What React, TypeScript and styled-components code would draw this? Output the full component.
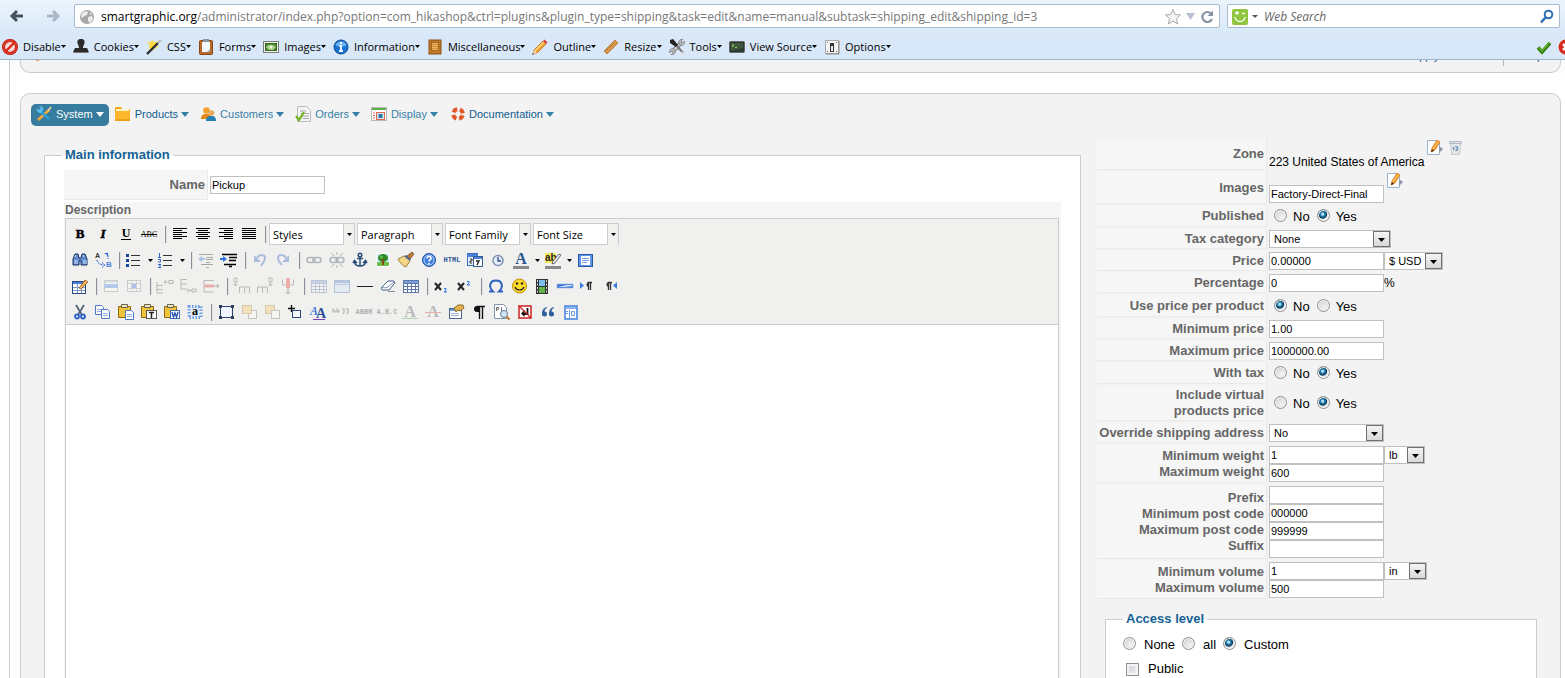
import React, { ReactNode } from 'react';
import styled, { createGlobalStyle, css } from 'styled-components';

const Global = createGlobalStyle`
  * { box-sizing: border-box; }
  body { margin: 0; background: #fff; color: #000; font: 13px/16px "Liberation Sans", Arial, sans-serif; overflow: hidden; }
  button, input, select, textarea { font: inherit; color: inherit; margin: 0; padding: 0; }
  button { border: 0; background: none; }
  svg { display: block; flex: none; }
`;

/* ---------- browser chrome ---------- */

const Page = styled.div`
  display: flex;
  flex-direction: column;
  height: 100vh;
  overflow: hidden;
`;

const Chrome = styled.header`
  flex: none;
  background: linear-gradient(#ebf4fd, #d9e8f8 34px);
  border-bottom: 1px solid #9fb4ce;
  font: 12px/16px "Open Sans", "Noto Sans", sans-serif;
  overflow: hidden;
`;

const NavBar = styled.div`
  display: flex;
  align-items: center;
  gap: 7px;
  padding: 4px 5px 0 8px;
`;

const NavButtons = styled.div`
  display: flex;
  gap: 18px;
  width: 59px;
`;

const IconButton = styled.button`
  display: flex;
  align-items: center;
  justify-content: center;
`;

const Field = styled.div<{ $grow?: boolean }>`
  display: flex;
  align-items: center;
  gap: 4px;
  height: 24px;
  padding: 1px 4px 0;
  background: #fff;
  border: 1px solid #a9bad0;
  border-radius: 2px;
  ${(p) => (p.$grow ? 'flex: 1; min-width: 0;' : 'flex: none; width: 333px;')}
`;

const Url = styled.div`
  flex: 1;
  min-width: 0;
  color: #777;
  white-space: nowrap;
  overflow: hidden;
  padding-left: 2px;
  b { color: #000; font-weight: 400; }
`;

const SearchInput = styled.input`
  flex: 1;
  min-width: 0;
  border: 0;
  background: none;
  outline: 0;
  font-style: italic;
  padding-left: 2px;
  &::placeholder { color: #666; opacity: 1; }
`;

const DevBar = styled.div`
  display: flex;
  align-items: center;
  height: 31px;
  padding: 6px 0 0 2px;
  font-size: 11px;
`;

const DevItem = styled.button`
  flex: none;
  display: flex;
  align-items: center;
  height: 22px;
  margin-right: 7px;
  white-space: nowrap;
  svg:first-child { margin-right: 5px; }
`;

const DevStatus = styled.div`
  display: flex;
  gap: 6px;
  margin-left: auto;
  margin-right: -9px;
`;

/* ---------- page frame ---------- */

const Frame = styled.main`
  flex: 1;
  min-height: 0;
  display: flex;
  flex-direction: column;
  margin-left: 9px;
  border-left: 1px solid #ccc;
`;

const TopStrip = styled.div`
  flex: none;
  height: 13px;
  background: #fbfbfb;
  padding: 0 4px 0 10px;
  margin-bottom: 20px;
  overflow: hidden;
`;

const TopPanel = styled.div`
  display: flex;
  align-items: flex-start;
  justify-content: flex-end;
  height: 13px;
  overflow: hidden;
  background: #f3f3f3;
  border: 1px solid #ccc;
  border-top: 0;
  border-radius: 0 0 10px 10px;
  padding: 0 10px;
`;

const TopMark = styled.span`
  width: 3px;
  height: 1px;
  margin: 0 auto 0 5px;
  background: #e8954a;
`;

const TopLink = styled.a<{ $right: number }>`
  margin-top: -11px;
  margin-right: ${(p) => p.$right}px;
  font-size: 11px;
  line-height: 14px;
  color: #146295;
  text-decoration: none;
`;

const TopDivider = styled.span`
  width: 1px;
  height: 6px;
  margin-right: 16px;
  background: #bbb;
`;

const Panel = styled.section`
  flex: 1;
  min-height: 0;
  overflow: hidden;
  margin: 0 4px 0 10px;
  background: #f3f3f3;
  border: 1px solid #ccc;
  border-bottom: 0;
  border-radius: 10px 10px 0 0;
`;

const Menu = styled.nav`
  display: flex;
  gap: 1px;
  padding: 10px 10px 0;
`;

const MenuItem = styled.a<{ $active?: boolean; $dark?: boolean }>`
  display: flex;
  align-items: center;
  gap: 3px;
  height: 22px;
  padding: 0 5px 2px;
  border-radius: 5px;
  font-size: 11px;
  text-decoration: none;
  color: ${(p) => (p.$active ? '#fff' : p.$dark ? '#0f5c92' : '#3680a8')};
  background: ${(p) => (p.$active ? '#367c9e' : 'transparent')};
  svg:first-child { margin-right: 1px; }
`;

const Columns = styled.div`
  display: grid;
  grid-template-columns: minmax(0, 1fr) 440px;
  gap: 16px;
  align-items: start;
  padding: 11px 23px 0 23px;
`;

const Fieldset = styled.fieldset<{ $top: number; $left: number }>`
  min-width: 0;
  margin: ${(p) => p.$top}px 0 0 ${(p) => p.$left}px;
  padding: 5px 17px 17px;
  border: 1px solid #ccc;
  background: #fff;
`;

const Legend = styled.legend`
  padding: 0 3px;
  font-weight: 700;
  color: #146295;
`;

/* ---------- forms ---------- */

const FormTable = styled.table<{ $full?: boolean }>`
  border-collapse: separate;
  border-spacing: 2px;
  width: ${(p) => (p.$full ? '100%' : 'auto')};
  margin-left: ${(p) => (p.$full ? 0 : -2)}px;
  td { padding: 0; }
`;

const KeyCell = styled.th<{ $w: number; $h: number }>`
  width: ${(p) => p.$w}px;
  height: ${(p) => p.$h}px;
  padding: 0 2px 0 0;
  text-align: right;
  font-weight: 700;
  color: #666;
  background: #f6f6f6;
  border-right: 1px solid #e9e9e9;
  border-bottom: 1px solid #e9e9e9;
  label, span { display: block; }
`;

const DescriptionCell = styled.td`
  background: #f6f6f6;
`;

const DescriptionLabel = styled.label`
  display: block;
  padding-left: 1px;
  font-size: 12px;
  line-height: 17px;
  font-weight: 700;
  color: #666;
`;

const Stack = styled.div`
  display: flex;
  flex-direction: column;
`;

const Line = styled.div<{ $align?: string }>`
  display: flex;
  align-items: ${(p) => p.$align || 'center'};
  font-size: 12px;
`;

const Lift = styled.div`
  display: flex;
  gap: 5px;
  padding-bottom: 14px;
  margin-left: 3px;
`;

const TextInput = styled.input`
  width: 115px;
  height: 18px;
  padding: 0 1px;
  border: 1px solid #c0c0c0;
  background: #fff;
  font-size: 11px;
  outline: 0;
`;

const SelectWrap = styled.span<{ $w: number }>`
  display: inline-grid;
  grid-template-columns: minmax(0, 1fr) 17px;
  align-items: center;
  width: ${(p) => p.$w}px;
  height: 18px;
  border: 1px solid #c0c0c0;
  background: #fff;
  font-size: 11px;
  select {
    grid-area: 1 / 1 / 2 / 3;
    appearance: none;
    border: 0;
    outline: 0;
    height: 16px;
    padding: 0 17px 0 4px;
    background: transparent;
  }
  > span {
    grid-area: 1 / 2;
    display: flex;
    align-items: center;
    justify-content: center;
    height: 16px;
    padding-top: 2px;
    border: 1px solid #707070;
    background: linear-gradient(#f4f4f4, #d8d8d8);
    pointer-events: none;
  }
`;

const RadioLabel = styled.label<{ $gap: number }>`
  display: flex;
  align-items: flex-start;
  gap: ${(p) => p.$gap}px;
  margin-right: 7px;
  span { padding-top: 1px; }
`;

const Radio = styled.input`
  appearance: none;
  flex: none;
  width: 13px;
  height: 13px;
  margin-top: 1px;
  border: 1px solid #8e8f8f;
  border-radius: 50%;
  background: radial-gradient(circle at 60% 65%, #f4f4f4, #c4c8cd);
  box-shadow: inset 0 0 0 1px #f6f6f6;
  &:checked {
    background: radial-gradient(circle at 42% 38%, #b5e2f5 0 1px, #2786b4 2px, #0b3a5c 4px, #e4e8ea 5px);
  }
`;

const RadioRow = styled.div<{ $indent: number }>`
  display: flex;
  padding-left: ${(p) => p.$indent}px;
`;

const AccessBody = styled.div`
  display: flex;
  flex-direction: column;
  gap: 8px;
  padding-top: 4px;
`;

const CheckLabel = styled.label`
  display: flex;
  align-items: center;
  gap: 9px;
  padding-left: 3px;
`;

const Checkbox = styled.input`
  appearance: none;
  width: 13px;
  height: 13px;
  border: 1px solid #8e8f8f;
  background: linear-gradient(135deg, #c9cdd2, #f6f6f6);
  box-shadow: inset 0 0 0 2px #f4f4f4;
`;

/* ---------- rich text editor ---------- */

const Editor = styled.div`
  margin: -1px 2px 0 1px;
  border: 1px solid #ccc;
  background: #fff;
`;

const Toolbar = styled.div`
  display: flex;
  flex-direction: column;
  gap: 4px;
  padding: 4px 2px 1px 3px;
  background: #f0f0ee;
  border-bottom: 1px solid #ccc;
`;

const ToolRow = styled.div`
  display: flex;
  height: 22px;
`;

const ToolButton = styled.button<{ $off?: boolean }>`
  flex: none;
  display: flex;
  align-items: center;
  justify-content: center;
  width: 22px;
  height: 22px;
  margin-right: 1px;
  color: #000;
  ${(p) => p.$off && css`opacity: 0.35;`}
`;

const SplitArrow = styled.button`
  display: flex;
  align-items: center;
  justify-content: center;
  width: 9px;
  height: 22px;
`;

const Separator = styled.span`
  width: 2px;
  height: 17px;
  margin: 3px 2px 0 4px;
  border-left: 1px solid #8f8f9c;
  border-right: 1px solid #e2e2e2;
`;

const ToolSelect = styled.span`
  display: grid;
  grid-template-columns: minmax(0, 1fr) 11px;
  width: 86px;
  height: 22px;
  margin-right: 2px;
  border: 1px solid #ccc;
  background: #fff;
  font: 11px/20px "Open Sans", "Noto Sans", sans-serif;
  select {
    grid-area: 1 / 1 / 2 / 3;
    appearance: none;
    border: 0;
    outline: 0;
    padding: 1px 12px 0 3px;
    background: transparent;
    color: #000;
  }
  > span {
    grid-area: 1 / 2;
    display: flex;
    align-items: center;
    justify-content: center;
    border-left: 1px solid #ccc;
    background: #f0f0ee;
    pointer-events: none;
  }
`;

const Body = styled.textarea`
  display: block;
  width: 100%;
  height: 420px;
  border: 0;
  outline: 0;
  resize: none;
  background: #fff;
`;

/* ---------- icons ---------- */

const Down = ({ w = 5, h = 3, color = '#000' }: { w?: number; h?: number; color?: string }) => (
  <svg width={w} height={h} viewBox="0 0 10 6" preserveAspectRatio="none" aria-hidden="true">
    <path d="M0 0h10L5 6z" fill={color} />
  </svg>
);

const Ico = ({ size = 16, box = 16, children }: { size?: number; box?: number; children: ReactNode }) => (
  <svg width={size} height={size} viewBox={`0 0 ${box} ${box}`} fill="none" aria-hidden="true">
    {children}
  </svg>
);

const PencilShape = () => (
  <>
    <path d="M1 15l1-4L11 2l3 3-9 9z" fill="#f6a02c" stroke="#b8660c" strokeWidth=".7" />
    <path d="M3 12l9-9" stroke="#ffdb8c" strokeWidth="1.3" />
    <path d="M11 2l1.600-1.500 3 3L14 5z" fill="#d9434c" />
    <path d="M1 15l1-4 3 3z" fill="#f1dcb9" />
    <path d="M0 16l1-2 1 1z" fill="#333" />
  </>
);

const dev: Record<string, ReactNode> = {
  disable: (
    <>
      <circle cx="8" cy="8" r="6.500" fill="#f6d7d2" stroke="#a91208" strokeWidth="3" />
      <circle cx="8" cy="8" r="6.500" stroke="#e23a27" strokeWidth="2" />
      <path d="M3.500 12.500l9-9" stroke="#d92a1b" strokeWidth="2.400" />
    </>
  ),
  cookies: (
    <>
      <path d="M8 0c3 0 4 2 3.500 4-.5 2-1.500 3-1.500 5h4l1.500 3v2H.5v-2L2 9h4c0-2-1-3-1.500-5C4 2 5 0 8 0z" fill="#2b2b2b" />
      <path d="M1 13.500h14" stroke="#777" />
    </>
  ),
  css: (
    <>
      <path d="M6 0l1.500 3.500L11 2 9.500 5.500 13 8 9 8.500 8 12 6 9 2 10l2-3.500L1 3l4 .5z" fill="#ffd93b" />
      <path d="M1 15L12 4" stroke="#2d2d2d" strokeWidth="2.400" />
      <path d="M12 4l3-3" stroke="#bbb" strokeWidth="2.400" />
    </>
  ),
  forms: (
    <>
      <rect x="1.500" y="1.500" width="13" height="14" rx="1" fill="#b96a2b" stroke="#8a4513" />
      <path d="M4 3h8v10H9l-5 0z" fill="#f4f7fb" />
      <path d="M9 13l3-3v3z" fill="#9fb0c4" />
      <path d="M5 0h6v3H5z" fill="#8d95a0" />
    </>
  ),
  images: (
    <>
      <rect x=".5" y="2.500" width="15" height="11" fill="#f5f5ef" stroke="#7a7a7a" />
      <rect x="2.500" y="4.500" width="11" height="7" fill="#4f8a35" stroke="#35661c" />
      <path d="M3 8c3-3 6-3 10 0l-3 3H6z" fill="#a9d08a" />
      <circle cx="8" cy="8" r="1.500" fill="#f4f9d8" />
    </>
  ),
  info: (
    <>
      <circle cx="8" cy="8" r="7" fill="#1a74d1" stroke="#0c4a94" />
      <path d="M2.500 6a6 6 0 0 1 11 0c-3 2-8 2-11 0z" fill="#6db4f2" />
      <path d="M8 3v2M6.500 7H8v5M6 12.200h4" stroke="#fff" strokeWidth="1.800" />
    </>
  ),
  misc: (
    <>
      <rect x="2" y="1" width="12" height="14" fill="#c07a2b" stroke="#8e5112" />
      <rect x="4.500" y="3.500" width="7" height="8" fill="#f0b35c" stroke="#a3661d" />
      <path d="M5 5.500h6M5 7.500h6M5 9.500h6" stroke="#cf8f3c" />
    </>
  ),
  outline: <PencilShape />,
  resize: (
    <>
      <path d="M1 12L12 1l3 3L4 15z" fill="#d8984c" stroke="#b0722c" strokeWidth=".8" />
      <path d="M4 10l1 1M6 8l1 1M8 6l1 1M10 4l1 1" stroke="#9a6426" strokeWidth=".8" />
    </>
  ),
  tools: (
    <>
      <path d="M3 13L13 3" stroke="#6d6d6d" strokeWidth="4" />
      <path d="M3 13L13 3" stroke="#d2d2d2" strokeWidth="2.400" />
      <path d="M10 5c-1-3 1-5 4-5l-2 2.500 1 1.500 3-2c0 4-3 5-5 4zM6 11c1 3-1 5-4 5l2-2.500L3 12l-3 2c0-4 3-5 5-4z" fill="#b9b9b9" stroke="#6d6d6d" strokeWidth=".6" />
      <path d="M1 1l3-1 5 6-2 2L1 4z" fill="#222" />
      <path d="M8 7l6 7" stroke="#777" strokeWidth="2" />
      <path d="M12 13l3 3" stroke="#ddd" strokeWidth="2" />
    </>
  ),
  source: (
    <>
      <rect x=".5" y="2.500" width="15" height="11" rx="1" fill="#2c3a2c" stroke="#62686e" />
      <path d="M2 4h12v5L2 12z" fill="#3f5640" />
      <path d="M3 5.500l2 1-2 1M6 8.500h2" stroke="#8fe04b" />
    </>
  ),
  options: (
    <>
      <rect x="1.500" y="1.500" width="13" height="13" fill="#f4f4f4" stroke="#a8a8a8" />
      <path d="M15 2v13H2" stroke="#888" />
      <rect x="6" y="4" width="4" height="9" fill="#333" />
      <rect x="7" y="7" width="2" height="5" fill="#f0f0f0" />
      <path d="M3 12.500h1M12 12.500h1M3 3.500h1M12 3.500h1" stroke="#777" />
    </>
  ),
};

const menuIcons: Record<string, ReactNode> = {
  system: (
    <>
      <path d="M2 14L13 4" stroke="#f0a83a" strokeWidth="2.600" />
      <path d="M12 5l3-4" stroke="#f5d9a0" strokeWidth="1.500" />
      <path d="M4 5l9 8" stroke="#2b9fd8" strokeWidth="2.400" />
      <path d="M1 2l2 2 2-2-2-2c3-.5 5 2 4 4L5 7C2 7.500 0 5 1 2z" fill="#58bdec" />
    </>
  ),
  products: (
    <>
      <path d="M0 2l1-1h5l1 2h8v12H0z" fill="#f6a40f" />
      <path d="M1 3h13v2H1z" fill="#fff2c4" />
      <path d="M0 5h15v10H0z" fill="#fdb72d" />
      <path d="M0 14h15" stroke="#e08a06" />
    </>
  ),
  customers: (
    <>
      <circle cx="6.500" cy="4.500" r="3.300" fill="#f2a02e" />
      <path d="M1 13c0-4 2-5 5.500-5S11 9 11 13z" fill="#e58717" />
      <circle cx="11.500" cy="7" r="2.800" fill="#e9a85a" />
      <path d="M6 15c0-4 2-5 5.500-5s4.500 2 4.500 5z" fill="#2480b4" />
    </>
  ),
  orders: (
    <>
      <path d="M2.500.5h9l4 4v11h-13z" fill="#f4f4f4" stroke="#bbb" />
      <path d="M5 5h6M6 7.500h8M7 10h7M8 12.500h6" stroke="#a6a6a6" />
      <path d="M1 10l3 4L9 6" stroke="#6fb51e" strokeWidth="2.200" />
    </>
  ),
  display: (
    <>
      <rect x=".5" y="1.500" width="15" height="13" fill="#fff" stroke="#b9b9b9" />
      <path d="M1 2h14v2H1z" fill="#5db247" />
      <path d="M2 7h2M2 9.500h2M2 12h2" stroke="#e2654d" />
      <rect x="5.500" y="6.500" width="8" height="7" fill="#cfe6f5" stroke="#e2654d" />
      <rect x="7.500" y="8" width="4" height="4" fill="#2c76a8" />
    </>
  ),
  docs: (
    <>
      <circle cx="9" cy="8" r="4.800" stroke="#f2ede8" strokeWidth="4" />
      <circle cx="9" cy="8" r="4.800" stroke="#e0592b" strokeWidth="4" strokeDasharray="4.600 2.940" strokeDashoffset="-1.500" />
    </>
  ),
};

const EditIcon = () => (
  <Ico>
    <path d="M.5.5h9l3 3v11H.5z" fill="#fdfdfd" stroke="#9db4d0" />
    <path d="M12 6l4 3-4 4z" fill="#8b97a8" />
    <path d="M4 12l1-4 5-8 3 2-5 8z" fill="#f69a23" stroke="#c96b0d" strokeWidth=".6" />
    <path d="M6 9l5-7" stroke="#ffd98a" />
    <path d="M4 12l1-3 2 2z" fill="#3a2a1a" />
  </Ico>
);

const TrashIcon = () => (
  <Ico>
    <path d="M2.500 2.500h10l-1 12h-8z" fill="#e4e7ea" stroke="#c3c9d0" />
    <path d="M1.500 1.500h12v2h-12z" fill="#dde1e6" stroke="#b4bbc3" />
    <circle cx="7.500" cy="8.500" r="2" stroke="#7393bd" strokeWidth="1.500" strokeDasharray="3 1.200" />
  </Ico>
);

const lines = (spans: [number, number][]) => (
  <path d={spans.map(([x, w], i) => `M${x} ${4.5 + i * 2}h${w}`).join('')} stroke="#000" />
);

const serif = (t: string, extra: React.SVGProps<SVGTextElement>) => (
  <text x="10" y="14" textAnchor="middle" fontFamily="Liberation Serif, serif" fontWeight="700" fontSize="13" fill="#000" {...extra}>
    {t}
  </text>
);

const tiny = (t: string, fill: string) => (
  <text x="10" y="12" textAnchor="middle" fontFamily="Liberation Mono, monospace" fontWeight="700" fontSize="7" fill={fill}>
    {t}
  </text>
);

const Doc = ({ x = 0, y = 0 }: { x?: number; y?: number }) => (
  <g transform={`translate(${x} ${y})`}>
    <path d="M.5.5h6l2 2v7h-8z" fill="#fff" stroke="#4d79c7" />
    <path d="M2 4.500h5M2 6.500h5" stroke="#8bb0e8" />
  </g>
);

const Clipboard = ({ children }: { children: ReactNode }) => (
  <>
    <path d="M2.500 4.500h12v11h-12z" fill="#f0c33c" stroke="#8d6a12" />
    <path d="M5.500 2.500h6v3h-6z" fill="#e9e4d0" stroke="#6d6340" />
    {children}
  </>
);

const Grid = ({ fill = '#fff' }: { fill?: string }) => (
  <>
    <rect x="2.500" y="4.500" width="15" height="12" fill={fill} stroke="#5c78a8" />
    <path d="M3 6h14" stroke="#7a9ee0" strokeWidth="2" />
    <path d="M3 7.500h14M3 10.500h14M3 13.500h14M6.500 7v9M10.500 7v9M14.500 7v9" stroke="#5c78a8" />
  </>
);

const tool: Record<string, ReactNode> = {
  bold: serif('B', { stroke: '#000', strokeWidth: 0.5 }),
  italic: serif('I', { fontStyle: 'italic', stroke: '#000', strokeWidth: 0.5 }),
  underline: (
    <>
      {serif('U', { y: 13, fontSize: 12 })}
      <path d="M5 15.500h10" stroke="#000" />
    </>
  ),
  strike: (
    <>
      <text x="10" y="13" textAnchor="middle" fontFamily="Liberation Serif, serif" fontSize="8" fill="#000">ABC</text>
      <path d="M2 10.500h16" stroke="#000" />
    </>
  ),
  left: lines([[3, 14], [3, 9], [3, 14], [3, 9], [3, 14], [3, 9]]),
  center: lines([[3, 14], [5, 10], [3, 14], [5, 10], [3, 14], [5, 10]]),
  right: lines([[3, 14], [8, 9], [3, 14], [8, 9], [3, 14], [8, 9]]),
  full: lines([[3, 14], [3, 14], [3, 14], [3, 14], [3, 14], [3, 14]]),
  find: (
    <>
      <path d="M3 9l2-5h3l1 4h2l1-4h3l2 5v6h-6v-4H9v4H3z" fill="#5f8ace" stroke="#17315f" />
      <path d="M5 7l1-2M14 7l-1-2M5 10v4M14 10v4M7 10v4M16 10v4" stroke="#cfe0fa" />
    </>
  ),
  replace: (
    <>
      <text x="2" y="8" fontFamily="Liberation Sans" fontWeight="700" fontSize="7" fill="#333">A</text>
      <text x="13" y="17" fontFamily="Liberation Sans" fontWeight="700" fontSize="8" fill="#4b7fe0">B</text>
      <path d="M4 10c0 3 3 5 7 5M9 12.500l3 2.500-3 2.500M15 5v4" stroke="#2b62d9" strokeDasharray="2 1" />
      <path d="M11 3h4v4l-1-2z" fill="#2b62d9" />
    </>
  ),
  bullets: (
    <>
      <path d="M2 5.500h3M2 10.500h3M2 15.500h3" stroke="#17479e" strokeWidth="3" />
      <path d="M7 5.500h9M7 10.500h9M7 15.500h9" stroke="#333" />
    </>
  ),
  numbers: (
    <>
      <path d="M3.500 3v4M2 7.500h3M2 9.500h2.500v2M2 12h3M2 14.500h3M3 16h2M2 17.500h3" stroke="#2f63bd" />
      <path d="M7 5.500h9M7 10.500h9M7 15.500h9" stroke="#333" />
    </>
  ),
  outdent: (
    <>
      <path d="M3 4.500h14M10 7.500h7M10 9.500h7M10 12.500h4M5 14.500h12M10 17.500h3" stroke="#222" />
      <path d="M2 9l4-3v2h3v2H6v2z" fill="#2f6fe0" />
    </>
  ),
  indent: (
    <>
      <path d="M3 4.500h15M10 7.500h8M10 10.500h7M5 14.500h12M10 16.500h3" stroke="#000" strokeWidth="1.500" />
      <path d="M8 9L4 6v2H1v2h3v2z" fill="#2f6fe0" />
    </>
  ),
  undo: (
    <>
      <path d="M7 8c2-4 8-4 8 0 0 3-2 5-4 8" stroke="#2d5fc0" strokeWidth="2" />
      <path d="M4 5v7h7z" fill="#2d5fc0" />
    </>
  ),
  redo: (
    <>
      <path d="M13 8c-2-4-8-4-8 0 0 3 2 5 4 7" stroke="#2d5fc0" strokeWidth="2" />
      <path d="M16 5v7H9z" fill="#2d5fc0" />
    </>
  ),
  link: (
    <>
      <rect x="3" y="7.500" width="8" height="5" rx="2.500" stroke="#3d4d66" strokeWidth="1.500" />
      <rect x="9" y="7.500" width="8" height="5" rx="2.500" stroke="#3d4d66" strokeWidth="1.500" />
    </>
  ),
  unlink: (
    <>
      <rect x="3" y="7.500" width="8" height="5" rx="2.500" stroke="#3d4d66" strokeWidth="1.500" />
      <rect x="9" y="7.500" width="8" height="5" rx="2.500" stroke="#3d4d66" strokeWidth="1.500" />
      <path d="M4 3l3 3M10 2v3M16 3l-3 3M4 17l3-3M10 18v-3M16 17l-3-3" stroke="#444" />
    </>
  ),
  anchor: (
    <>
      <circle cx="10" cy="5" r="1.800" stroke="#2c4a7c" strokeWidth="1.500" />
      <path d="M10 7v9M7 8.500h6M4.500 11c0 3 2 5 5.500 5s5.500-2 5.500-5M3 13l1.500-2.500L7 13M13 13l2.500-2.500L17 13" stroke="#2c4a7c" strokeWidth="1.500" />
    </>
  ),
  image: (
    <>
      <path d="M3 3h14v14H3z" fill="#fff" />
      <path d="M4 4h12v9H4z" fill="#cfe8fb" />
      <path d="M4 12h12v4H4z" fill="#6fc04a" />
      <ellipse cx="10" cy="8" rx="5" ry="4" fill="#2f8a25" />
      <circle cx="8.500" cy="7" r="1.500" fill="#6cc44c" />
      <path d="M10 9v6" stroke="#8a4a18" strokeWidth="2" />
    </>
  ),
  cleanup: (
    <>
      <path d="M2 9l6-3 6 5-4 6c-3-1-6-4-8-8z" fill="#f3d787" stroke="#8a6a20" strokeWidth=".8" />
      <path d="M8 6l2-1 5 4-1 2z" fill="#4d6fae" />
      <path d="M11 6l5-4 2 2-4 5z" fill="#b9793a" stroke="#7a4818" strokeWidth=".7" />
    </>
  ),
  help: (
    <>
      <circle cx="10" cy="10" r="6.500" fill="#3f7fe0" stroke="#1c4ea3" />
      <circle cx="10" cy="10" r="5" stroke="#cfe0fb" strokeWidth=".8" />
      <path d="M8 8.500c0-3 4.500-2.500 4 0-.3 1.500-2 1.200-2 3M10 13v1.500" stroke="#fff" strokeWidth="1.600" />
    </>
  ),
  html: tiny('HTML', '#2c5a96'),
  date: (
    <>
      <rect x="2.500" y="3.500" width="10" height="12" fill="#e6eefb" stroke="#3a6ac0" />
      <path d="M2 4h11v3H2z" fill="#4a80dc" />
      <rect x="8.500" y="6.500" width="9" height="10" fill="#fff" stroke="#3a5c92" />
      <path d="M9 8h8" stroke="#4a80dc" strokeWidth="2" />
      <path d="M11 11h3l-2 4" stroke="#222" strokeWidth="1.400" />
      <path d="M5 9h2v2H5v2h2" stroke="#333" />
    </>
  ),
  time: (
    <>
      <circle cx="10" cy="10.500" r="5" fill="#e6eefa" stroke="#8093b5" strokeWidth="1.500" />
      <path d="M10 7v4h3" stroke="#28488a" strokeWidth="1.300" />
    </>
  ),
  color: (
    <>
      {serif('A', { y: 14, fontSize: 16, fill: '#2d5590' })}
      <path d="M2 17.500h16" stroke="#888" strokeWidth="3" />
    </>
  ),
  highlight: (
    <>
      <path d="M2 3h11v10H2z" fill="#f7ea5a" />
      <text x="2" y="11" fontFamily="Liberation Sans" fontSize="10" fontWeight="700" fill="#222">ab</text>
      <path d="M9 14l1-3 6-7 2 1-6 8z" fill="#e4e8ee" stroke="#555" strokeWidth=".8" />
      <path d="M2 17.500h16" stroke="#888" strokeWidth="3" />
    </>
  ),
  screen: (
    <>
      <rect x="3.500" y="4.500" width="14" height="12" fill="#5d95ea" stroke="#2c56a3" />
      <rect x="6" y="6" width="9" height="9" fill="#fff" />
      <path d="M7 8.500h7M7 10.500h7M7 12.500h5" stroke="#7aa2df" />
    </>
  ),
  table: (
    <>
      <rect x="2.500" y="5.500" width="13" height="12" fill="#fff" stroke="#2c4a80" />
      <path d="M3 7h12" stroke="#4a80dc" strokeWidth="2" />
      <path d="M3 11.500h12M3 14.500h12M7.500 8v9M11.500 8v9" stroke="#7a9ccc" />
      <path d="M9 12l6-8 3 2-7 7z" fill="#f0b05a" stroke="#8a4d12" strokeWidth=".7" />
    </>
  ),
  rowProps: (
    <>
      <rect x="3.500" y="4.500" width="13" height="11" fill="#fff" stroke="#888" />
      <path d="M3 10h14" stroke="#4a86e8" strokeWidth="4" />
      <path d="M3 6h14" stroke="#8aa" />
    </>
  ),
  cellProps: (
    <>
      <rect x="3.500" y="4.500" width="13" height="11" fill="#fff" stroke="#888" />
      <path d="M3 7.500h14M3 12.500h14M7.500 5v10M12.500 5v10" stroke="#99a" />
      <path d="M8 8h4v4H8z" fill="#2f6fe0" />
    </>
  ),
  rowBefore: <path d="M2 6v11h6M2 9.500h6M2 13.500h6M10 6h4M11 4L9 6l2 2M14 4.500h4v3h-4z" stroke="#555" />,
  rowAfter: <path d="M3 3v10h6M3 3.500h6M3 8h6M10 14.500h4M11 12.500l-2 2 2 2M14 13h4v3h-4z" stroke="#555" />,
  rowDelete: (
    <>
      <path d="M3 4v12h10M3 4.500h10" stroke="#555" />
      <path d="M3 10h10" stroke="#e23a3a" strokeWidth="3" />
      <path d="M13 10h5M16 8l2 2-2 2" stroke="#333" />
    </>
  ),
  colBefore: <path d="M7.500 17v-6h10v6M12.500 11v6M2 2h3v4H2zM3.500 6v4M1.500 8l2 2 2-2" stroke="#555" />,
  colAfter: <path d="M2.500 17v-6h10v6M7.500 11v6M14 2h3v4h-3zM15.500 6v4M13.500 8l2 2 2-2" stroke="#555" />,
  colDelete: (
    <>
      <path d="M4.500 4v5h3M15.500 4v5h-3M4.500 3.500v2M15.500 3.500v2" stroke="#555" />
      <path d="M10 2v10" stroke="#e23a3a" strokeWidth="4" />
      <path d="M10 12v6M8 16l2 2 2-2" stroke="#333" />
    </>
  ),
  split: <Grid />,
  merge: (
    <>
      <rect x="2.500" y="4.500" width="15" height="12" fill="#cfe0f8" stroke="#4a6ea8" />
      <path d="M3 6h14" stroke="#4a7dd8" strokeWidth="2" />
      <path d="M7.500 5v3M12.500 5v3M3 8.500h14" stroke="#6f90c4" />
    </>
  ),
  rule: <path d="M2 10.500h16" stroke="#222" />,
  eraser: (
    <>
      <path d="M4 11l6-6h5c2 0 2 2 1 3l-5 6H5c-2 0-2-2-1-3z" fill="#fff" stroke="#3f5a88" />
      <path d="M4 11c1 1 4 1 6 0l6-5" stroke="#7890b8" />
      <path d="M10 15.500h7" stroke="#888" />
    </>
  ),
  visual: <Grid />,
  sub: (
    <>
      <path d="M3 7l6 7M9 7l-6 7" stroke="#222" strokeWidth="2" />
      <path d="M12 12.500h2v1.500l-2 2h3" stroke="#2f6fe0" />
    </>
  ),
  sup: (
    <>
      <path d="M3 7l6 7M9 7l-6 7" stroke="#222" strokeWidth="2" />
      <path d="M12 5.500h2V7l-2 2h3" stroke="#2f6fe0" />
    </>
  ),
  omega: <path d="M3 15.500h4c-5-5-3-11 3-11s8 6 3 11h4" stroke="#2f62c0" strokeWidth="2" />,
  smile: (
    <>
      <circle cx="10.500" cy="10" r="7" fill="#ffdb2e" stroke="#c48a0a" />
      <circle cx="8" cy="7.500" r="1.200" fill="#222" />
      <circle cx="13" cy="7.500" r="1.200" fill="#222" />
      <path d="M6 11c1.500 4 7.500 4 9 0" stroke="#222" strokeWidth="1.200" />
    </>
  ),
  media: (
    <>
      <path d="M4 3h12v15H4z" fill="#333" />
      <path d="M7 4h6v6H7z" fill="#7cc0f0" />
      <path d="M7 11h6v6H7z" fill="#63b44a" />
      <path d="M5.500 4v13M14.500 4v13" stroke="#ddd" strokeDasharray="2 1.500" />
    </>
  ),
  hr: (
    <>
      <path d="M2 8h16v4H2z" fill="#3f78d8" stroke="#8fb0e6" strokeWidth=".6" />
      <path d="M3 11l9-2h5v1l-8 1z" fill="#dceaff" />
    </>
  ),
  ltr: (
    <>
      <path d="M2 6l4 3.500L2 13z" fill="#3f7fe0" />
      <path d="M10.500 14V6M12.500 14V6M10 6.500h4" stroke="#333" strokeWidth="1.300" />
      <path d="M11 6a2 2 0 0 0 0 5z" fill="#333" />
    </>
  ),
  rtl: (
    <>
      <path d="M16 6l-4 3.500 4 3.500z" fill="#3f7fe0" />
      <path d="M7.500 14V6M9.500 14V6M7 6.500h4" stroke="#333" strokeWidth="1.300" />
      <path d="M8 6a2 2 0 0 0 0 5z" fill="#333" />
    </>
  ),
  cut: (
    <>
      <path d="M6 3l6 10M14 3L8 13" stroke="#53667c" strokeWidth="1.800" />
      <circle cx="7" cy="14.500" r="2" stroke="#2d62c9" strokeWidth="1.800" />
      <circle cx="13" cy="14.500" r="2" stroke="#2d62c9" strokeWidth="1.800" />
    </>
  ),
  copy: (
    <>
      <Doc x={2} y={3} />
      <Doc x={8} y={7} />
    </>
  ),
  paste: (
    <Clipboard>
      <Doc x={9} y={8} />
    </Clipboard>
  ),
  pasteText: (
    <Clipboard>
      <rect x="7.500" y="8.500" width="10" height="8" fill="#fff" stroke="#555" />
      <path d="M10 10.500h5M12.500 10v6" stroke="#222" strokeWidth="1.500" />
    </Clipboard>
  ),
  pasteWord: (
    <Clipboard>
      <rect x="8.500" y="8.500" width="9" height="8" fill="#fff" stroke="#3a6ac0" />
      <path d="M10 10l1.500 5 1.500-4 1.500 4L16 10" stroke="#2a57b0" strokeWidth="1.400" />
    </Clipboard>
  ),
  select: (
    <>
      <rect x="4" y="4.500" width="12" height="11" stroke="#6f9ce8" strokeWidth="3" strokeDasharray="1.500 1.500" />
      <rect x="6" y="6" width="8" height="8" fill="#dbe8fb" />
      {serif('a', { y: 13, fontSize: 12 })}
    </>
  ),
  layer: (
    <>
      <rect x="4.500" y="4.500" width="12" height="11" fill="#f0f5ff" stroke="#30466e" />
      <path d="M3 3h3v3H3zM15 3h3v3h-3zM3 14h3v3H3zM15 14h3v3h-3z" fill="#2a3f66" />
    </>
  ),
  forward: (
    <>
      <rect x="9.500" y="8.500" width="8" height="8" fill="#fff" stroke="#777" />
      <rect x="3.500" y="3.500" width="9" height="8" fill="#f3c558" stroke="#a8842c" />
    </>
  ),
  backward: (
    <>
      <rect x="3.500" y="3.500" width="9" height="8" fill="#f3c558" stroke="#a8842c" />
      <rect x="9.500" y="8.500" width="8" height="8" fill="#fff" stroke="#777" />
    </>
  ),
  absolute: (
    <>
      <path d="M3 6.500h7M6.500 3v7" stroke="#111" strokeWidth="1.400" />
      <rect x="7.500" y="8.500" width="8" height="7" fill="#f5f9ff" stroke="#2c4a80" />
    </>
  ),
  style: (
    <>
      <text x="2" y="13" fontFamily="Liberation Serif" fontStyle="italic" fontWeight="700" fontSize="12" fill="#3f78d8">A</text>
      <text x="8" y="16" fontFamily="Liberation Serif" fontWeight="700" fontSize="14" fill="#2a4f96">A</text>
      <path d="M5 17.500h12" stroke="#7a3fb0" />
    </>
  ),
  cite: <path d="M3 7H2v3h2V8M7 7H6v3h2V8M11 7h2v3l-1 2M15 7h2v3l-1 2" stroke="#444" strokeWidth="1.200" />,
  abbr: tiny('ABBR', '#333'),
  acronym: tiny('A.B.C', '#333'),
  ins: (
    <>
      {serif('A', { y: 15, fontSize: 16, fill: '#555' })}
      <path d="M2 16.500h16" stroke="#3aa03a" />
    </>
  ),
  del: (
    <>
      {serif('A', { y: 15, fontSize: 16, fill: '#555' })}
      <path d="M2 10.500h16" stroke="#e23a3a" />
    </>
  ),
  attribs: (
    <>
      <rect x="3.500" y="6.500" width="12" height="10" fill="#fff" stroke="#4a6590" />
      <path d="M4 8h11" stroke="#6a9ae0" strokeWidth="2" />
      <path d="M5 11.500h8M5 13.500h8" stroke="#9ab0d0" />
      <path d="M8 6l4-3h5l1 3-4 3-2-1-2 2z" fill="#e3b44e" stroke="#7a5614" strokeWidth=".8" />
    </>
  ),
  visualChars: (
    <>
      <path d="M10 4H8a3 3 0 0 0 0 6h2z" fill="#111" />
      <path d="M10.500 4v13M13.500 4v13M8 4.500h8" stroke="#111" strokeWidth="1.400" />
    </>
  ),
  preview: (
    <>
      <path d="M2.500 2.500h9l3 3v11h-12z" fill="#fff" stroke="#8093ad" />
      <path d="M4.500 5v4M4.500 5.500h2v2h-2M9.500 5v4" stroke="#777" />
      <circle cx="12" cy="12" r="3.500" fill="#cfe2f5" stroke="#6a7f9a" />
      <path d="M14.500 14.500l3 3" stroke="#c47a2c" strokeWidth="2.200" />
    </>
  ),
  nonbreaking: (
    <>
      <rect x="4" y="4" width="12" height="12" fill="#fff" stroke="#cc2222" strokeWidth="1.500" />
      <path d="M12.500 6v6H8" stroke="#111" strokeWidth="1.800" />
      <path d="M9.500 8v7L6 11.500z" fill="#111" />
      <path d="M4 4l12 12" stroke="#cc2222" strokeWidth="1.200" />
    </>
  ),
  quote: (
    <path
      d="M9 5C5 6 4 9 4 12a2.500 2.500 0 1 0 2.500-2.500C6.500 8 7.500 6.500 9 6zM16 5c-4 1-5 4-5 7a2.500 2.500 0 1 0 2.500-2.500c0-1.500 1-3 2.500-3.500z"
      fill="#2d5fa0"
    />
  ),
  template: (
    <>
      <rect x="4" y="4" width="12" height="13" fill="#fff" stroke="#3f7fe0" strokeWidth="1.500" />
      <path d="M5 6h10" stroke="#8ab4f2" strokeWidth="2" />
      <path d="M8.500 8v8M5 9.500h2M5 11.500h2M10.500 9.500h3v4h-3z" stroke="#6a9ae8" />
    </>
  ),
};

/* A leading "-" marks a disabled tool, "|" a separator, a trailing "+" a split button. */
const toolRows = [
  'bold italic underline strike | left center right full |',
  'find replace | bullets+ numbers+ | -outdent indent | -undo -redo | -link -unlink anchor image cleanup help html date time color+ highlight+ screen',
  'table | -rowProps -cellProps | -rowBefore -rowAfter -rowDelete | -colBefore -colAfter -colDelete | -split -merge rule eraser visual | sub sup | omega smile media hr ltr rtl',
  'cut copy paste pasteText pasteWord select | layer -forward -backward absolute style -cite -abbr -acronym -ins -del attribs visualChars preview nonbreaking quote template',
];

const toolSelects = ['Styles', 'Paragraph', 'Font Family', 'Font Size'];

const Tool = ({ code }: { code: string }) => {
  if (code === '|') return <Separator />;
  const off = code.startsWith('-');
  const split = code.endsWith('+');
  const name = code.replace(/[-+]/g, '');
  return (
    <>
      <ToolButton type="button" aria-label={name} $off={off} disabled={off}>
        <Ico size={20} box={20}>{tool[name]}</Ico>
      </ToolButton>
      {split && (
        <SplitArrow type="button" aria-label={`${name} options`}>
          <Down />
        </SplitArrow>
      )}
    </>
  );
};

/* ---------- form parts ---------- */

const Select = ({ id, value, width, label }: { id?: string; value: string; width: number; label?: string }) => (
  <SelectWrap $w={width}>
    <select id={id} aria-label={label} defaultValue={value}>
      <option>{value}</option>
    </select>
    <span><Down w={7} h={4} /></span>
  </SelectWrap>
);

const Choice = ({ name, value, options, indent = 5, gap = 6 }: { name: string; value: string; options: string[]; indent?: number; gap?: number }) => (
  <RadioRow $indent={indent} role="radiogroup" aria-label={name}>
    {options.map((o) => (
      <RadioLabel key={o} $gap={gap}>
        <Radio type="radio" name={name} defaultChecked={o === value} />
        <span>{o}</span>
      </RadioLabel>
    ))}
  </RadioRow>
);

const Row = ({ height, labels, ids, children }: { height: number; labels: string[]; ids?: string[]; children: ReactNode }) => (
  <tr>
    <KeyCell scope="row" $w={170} $h={height}>
      {labels.map((l, i) => (ids ? <label key={l} htmlFor={ids[i]}>{l}</label> : <span key={l}>{l}</span>))}
    </KeyCell>
    <td>{children}</td>
  </tr>
);

const yesNo = ['No', 'Yes'];

const devItems: [string, string][] = [
  ['disable', 'Disable'], ['cookies', 'Cookies'], ['css', 'CSS'], ['forms', 'Forms'], ['images', 'Images'],
  ['info', 'Information'], ['misc', 'Miscellaneous'], ['outline', 'Outline'], ['resize', 'Resize'],
  ['tools', 'Tools'], ['source', 'View Source'], ['options', 'Options'],
];

const menuItems: [string, string, boolean][] = [
  ['system', 'System', false], ['products', 'Products', true], ['customers', 'Customers', false],
  ['orders', 'Orders', false], ['display', 'Display', false], ['docs', 'Documentation', true],
];

export default function App() {
  return (
    <Page>
      <Global />
      <Chrome>
        <NavBar>
          <NavButtons>
            <IconButton type="button" aria-label="Back">
              <Ico size={18} box={18}><path d="M15 9H5M9 4L4 9l5 5" stroke="#47525f" strokeWidth="3" /></Ico>
            </IconButton>
            <IconButton type="button" aria-label="Forward">
              <Ico size={18} box={18}><path d="M3 9h10M9 4l5 5-5 5" stroke="#a9b6c6" strokeWidth="3" /></Ico>
            </IconButton>
          </NavButtons>
          <Field $grow>
            <Ico>
              <circle cx="8" cy="8" r="7" fill="#a6a6a6" />
              <path d="M3 4c2-2 5-2 6-1l-1 3-3 1-1 2-2-1zM9 8l4-1 1 3-3 4-2-2zM11 3l2 2-2 1z" fill="#ececec" />
            </Ico>
            <Url><b>smartgraphic.org</b>/administrator/index.php?option=com_hikashop&amp;ctrl=plugins&amp;plugin_type=shipping&amp;task=edit&amp;name=manual&amp;subtask=shipping_edit&amp;shipping_id=3</Url>
            <IconButton type="button" aria-label="Bookmark">
              <Ico size={18} box={18}><path d="M9 1.500l2.300 5 5.200.5-4 3.500 1.200 5.500L9 13.200 4.300 16l1.200-5.500-4-3.500 5.200-.5z" fill="#f3f3f3" stroke="#a5a9ae" /></Ico>
            </IconButton>
            <IconButton type="button" aria-label="History"><Down w={9} h={7} color="#b6bfd0" /></IconButton>
            <IconButton type="button" aria-label="Reload">
              <Ico><path d="M12 4.500A5 5 0 1 0 13 10" stroke="#8693a3" strokeWidth="2.200" /><path d="M8.500 7H14V1.500z" fill="#8693a3" /></Ico>
            </IconButton>
          </Field>
          <Field>
            <Ico>
              <rect width="16" height="16" rx="2" fill="#8fc63d" />
              <path d="M3 4h4M5 2v4M10 4.500h3M3 8c1 6 9 6 10 0" stroke="#fff" strokeWidth="1.300" />
            </Ico>
            <Down w={6} h={3} color="#555" />
            <SearchInput placeholder="Web Search" aria-label="Web Search" />
            <IconButton type="button" aria-label="Search">
              <Ico><circle cx="9.500" cy="5.500" r="3.800" stroke="#2f6fb5" strokeWidth="2" /><path d="M6.500 8.500L2 13.500" stroke="#2f6fb5" strokeWidth="2.600" /></Ico>
            </IconButton>
          </Field>
        </NavBar>
        <DevBar>
          {devItems.map(([icon, text]) => (
            <DevItem key={icon} type="button">
              <Ico>{dev[icon]}</Ico>
              {text}
              <Down />
            </DevItem>
          ))}
          <DevStatus>
            <Ico><path d="M2 8.500l4 4.500 8-9" stroke="#2f7d0e" strokeWidth="3.500" /><path d="M3 9l3 3 7-8" stroke="#62b52a" strokeWidth="1.500" /></Ico>
            <Ico><circle cx="8" cy="8" r="7.500" fill="#d9281c" /><path d="M5 5l6 6M11 5l-6 6" stroke="#fff" strokeWidth="2.500" /></Ico>
          </DevStatus>
        </DevBar>
      </Chrome>

      <Frame>
        <TopStrip>
          <TopPanel>
            <TopMark />
            <TopLink href="#apply" $right={64}>Apply</TopLink>
            <TopDivider />
            <TopLink href="#help" $right={7}>Help</TopLink>
          </TopPanel>
        </TopStrip>

        <Panel>
          <Menu>
            {menuItems.map(([icon, text, dark]) => (
              <MenuItem key={icon} href={`#${icon}`} $active={icon === 'system'} $dark={dark}>
                <Ico>{menuIcons[icon]}</Ico>
                {text}
                <Down w={8} h={5} color={icon === 'system' ? '#fff' : '#3680a8'} />
              </MenuItem>
            ))}
          </Menu>

          <Columns>
            <Fieldset $top={10} $left={0}>
              <Legend>Main information</Legend>
              <FormTable $full>
                <tbody>
                  <tr>
                    <KeyCell scope="row" $w={144} $h={30}><label htmlFor="name">Name</label></KeyCell>
                    <td><Line><TextInput id="name" defaultValue="Pickup" /></Line></td>
                  </tr>
                  <tr>
                    <DescriptionCell colSpan={2}>
                      <DescriptionLabel htmlFor="description">Description</DescriptionLabel>
                      <Editor>
                        <Toolbar>
                          {toolRows.map((row, i) => (
                            <ToolRow key={row}>
                              {row.split(' ').map((code, k) => <Tool key={k} code={code} />)}
                              {i === 0 && toolSelects.map((s) => (
                                <ToolSelect key={s}>
                                  <select aria-label={s} defaultValue={s}><option>{s}</option></select>
                                  <span><Down /></span>
                                </ToolSelect>
                              ))}
                            </ToolRow>
                          ))}
                        </Toolbar>
                        <Body id="description" />
                      </Editor>
                    </DescriptionCell>
                  </tr>
                </tbody>
              </FormTable>
            </Fieldset>

            <div>
              <FormTable>
                <tbody>
                  <Row height={31} labels={['Zone']}>
                    <Line $align="flex-end">
                      223 United States of America
                      <Lift>
                        <IconButton type="button" aria-label="Edit zone"><EditIcon /></IconButton>
                        <IconButton type="button" aria-label="Delete zone"><TrashIcon /></IconButton>
                      </Lift>
                    </Line>
                  </Row>
                  <Row height={32} labels={['Images']} ids={['images']}>
                    <Line $align="flex-end">
                      <TextInput id="images" defaultValue="Factory-Direct-Final" />
                      <Lift><IconButton type="button" aria-label="Edit images"><EditIcon /></IconButton></Lift>
                    </Line>
                  </Row>
                  <Row height={21} labels={['Published']}><Choice name="Published" value="Yes" options={yesNo} /></Row>
                  <Row height={20} labels={['Tax category']} ids={['tax']}><Line><Select id="tax" value="None" width={122} /></Line></Row>
                  <Row height={20} labels={['Price']} ids={['price']}>
                    <Line><TextInput id="price" defaultValue="0.00000" /><Select value="$ USD" width={59} label="Currency" /></Line>
                  </Row>
                  <Row height={20} labels={['Percentage']} ids={['percentage']}>
                    <Line><TextInput id="percentage" defaultValue="0" />%</Line>
                  </Row>
                  <Row height={22} labels={['Use price per product']}><Choice name="Use price per product" value="No" options={yesNo} /></Row>
                  <Row height={20} labels={['Minimum price']} ids={['minp']}><Line><TextInput id="minp" defaultValue="1.00" /></Line></Row>
                  <Row height={20} labels={['Maximum price']} ids={['maxp']}><Line><TextInput id="maxp" defaultValue="1000000.00" /></Line></Row>
                  <Row height={21} labels={['With tax']}><Choice name="With tax" value="Yes" options={yesNo} /></Row>
                  <Row height={35} labels={['Include virtual', 'products price']}><Choice name="Include virtual products price" value="Yes" options={yesNo} /></Row>
                  <Row height={20} labels={['Override shipping address']} ids={['override']}><Line><Select id="override" value="No" width={115} /></Line></Row>
                  <Row height={38} labels={['Minimum weight', 'Maximum weight']} ids={['minw', 'maxw']}>
                    <Stack>
                      <Line><TextInput id="minw" defaultValue="1" /><Select value="lb" width={41} label="Weight unit" /></Line>
                      <TextInput id="maxw" defaultValue="600" />
                    </Stack>
                  </Row>
                  <Row height={74} labels={['Prefix', 'Minimum post code', 'Maximum post code', 'Suffix']} ids={['prefix', 'minc', 'maxc', 'suffix']}>
                    <Stack>
                      <TextInput id="prefix" />
                      <TextInput id="minc" defaultValue="000000" />
                      <TextInput id="maxc" defaultValue="999999" />
                      <TextInput id="suffix" />
                    </Stack>
                  </Row>
                  <Row height={38} labels={['Minimum volume', 'Maximum volume']} ids={['minv', 'maxv']}>
                    <Stack>
                      <Line><TextInput id="minv" defaultValue="1" /><Select value="in" width={43} label="Volume unit" /></Line>
                      <TextInput id="maxv" defaultValue="500" />
                    </Stack>
                  </Row>
                </tbody>
              </FormTable>

              <Fieldset $top={10} $left={8}>
                <Legend>Access level</Legend>
                <AccessBody>
                  <Choice name="Access level" value="Custom" options={['None', 'all', 'Custom']} indent={0} gap={8} />
                  <CheckLabel><Checkbox type="checkbox" />Public</CheckLabel>
                </AccessBody>
              </Fieldset>
            </div>
          </Columns>
        </Panel>
      </Frame>
    </Page>
  );
}
